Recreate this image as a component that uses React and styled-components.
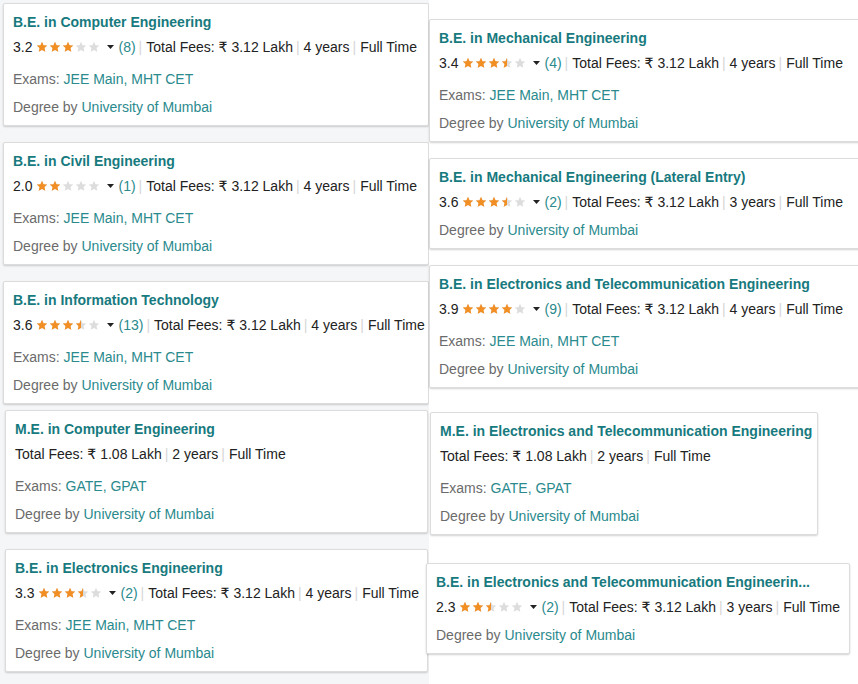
import React, { useId } from 'react';
import styled, { createGlobalStyle } from 'styled-components';

const GlobalStyle = createGlobalStyle`
  html, body {
    margin: 0;
    padding: 0;
    background: #fff;
  }
  body {
    font-family: "Liberation Sans", Arial, "DejaVu Sans", sans-serif;
    font-size: 14px;
    color: #333;
  }
`;

const Page = styled.div`
  display: flex;
  width: 858px;
  height: 684px;
  overflow: hidden;
`;

const Column = styled.div`
  flex: ${p => (p.$width ? `0 0 ${p.$width}px` : '1 1 auto')};
  min-width: 0;
  display: flex;
  flex-direction: column;
  align-items: flex-start;
  background: ${p => p.$bg};
`;

const Card = styled.div`
  box-sizing: border-box;
  flex-shrink: 0;
  width: ${p => p.$width}px;
  margin-top: ${p => p.$top}px;
  margin-left: ${p => p.$left}px;
  padding: 8px 10px 8px 9px;
  overflow: hidden;
  background: #fff;
  border: 1px solid #dcdcdc;
  border-radius: 2px;
  box-shadow: 0 1px 2px rgba(0, 0, 0, 0.18);
`;

const Title = styled.div`
  font-weight: bold;
  font-size: 14px;
  line-height: 20px;
  color: #177a7e;
  white-space: nowrap;
`;

const MetaRow = styled.div`
  display: flex;
  align-items: center;
  margin-top: 5px;
  line-height: 20px;
  white-space: nowrap;
  color: #222;

  & > * {
    flex-shrink: 0;
  }
`;

const StarRow = styled.span`
  display: inline-flex;
  gap: 1px;
  margin-left: 4px;
`;

const Caret = styled.svg`
  margin-left: 7px;
`;

const Count = styled.span`
  margin-left: 4px;
  color: #2a8a8d;
`;

const Sep = styled.span`
  margin: 0 4px 0 3px;
  color: #d6d6d6;
`;

const InfoLine = styled.div`
  margin-top: ${p => (p.$spaced ? 12 : 8)}px;
  line-height: 20px;
  color: #6b6b6b;
  white-space: nowrap;
`;

const Link = styled.span`
  color: #2a8a8d;
`;

const STAR = 'M12 1.6l3.1 6.8 7.4.8-5.5 5 1.6 7.4L12 17.8l-6.6 3.8 1.6-7.4-5.5-5 7.4-.8z';

const Star = ({ fill }) => {
  const id = 's' + useId().replace(/[^a-zA-Z0-9]/g, '');
  return (
    <svg width="12" height="12" viewBox="0 0 24 24">
      <defs>
        <clipPath id={id}>
          <rect x="0" y="0" width={24 * fill} height="24" />
        </clipPath>
      </defs>
      <path d={STAR} fill="#dddddd" />
      {fill > 0 && <path d={STAR} fill="#f28f24" clipPath={`url(#${id})`} />}
    </svg>
  );
};

const Stars = ({ rating }) => {
  const r = Math.round(rating * 2) / 2;
  return (
    <StarRow>
      {[0, 1, 2, 3, 4].map(i => (
        <Star key={i} fill={Math.max(0, Math.min(1, r - i))} />
      ))}
    </StarRow>
  );
};

const CourseCard = ({ c, width, top, left }) => (
  <Card $width={width} $top={top} $left={left}>
    <Title>{c.title}</Title>
    <MetaRow>
      {c.rating != null && (
        <>
          <span>{c.rating.toFixed(1)}</span>
          <Stars rating={c.rating} />
          <Caret width="7" height="4" viewBox="0 0 7 4">
            <path d="M0 0h7L3.5 4z" fill="#222" />
          </Caret>
          <Count>({c.reviews})</Count>
          <Sep>|</Sep>
        </>
      )}
      <span>Total Fees: ₹ {c.fees} Lakh</span>
      <Sep>|</Sep>
      <span>{c.years} years</span>
      <Sep>|</Sep>
      <span>Full Time</span>
    </MetaRow>
    {c.exams && (
      <InfoLine $spaced>
        Exams: <Link>{c.exams}</Link>
      </InfoLine>
    )}
    <InfoLine>
      Degree by <Link>University of Mumbai</Link>
    </InfoLine>
  </Card>
);

const JEE = 'JEE Main, MHT CET';
const GATE = 'GATE, GPAT';

const leftCards = [
  { c: { title: 'B.E. in Computer Engineering', rating: 3.2, reviews: 8, fees: '3.12', years: 4, exams: JEE }, width: 426, top: 3, left: 3 },
  { c: { title: 'B.E. in Civil Engineering', rating: 2.0, reviews: 1, fees: '3.12', years: 4, exams: JEE }, width: 426, top: 16, left: 3 },
  { c: { title: 'B.E. in Information Technology', rating: 3.6, reviews: 13, fees: '3.12', years: 4, exams: JEE }, width: 426, top: 16, left: 3 },
  { c: { title: 'M.E. in Computer Engineering', fees: '1.08', years: 2, exams: GATE }, width: 423, top: 6, left: 5 },
  { c: { title: 'B.E. in Electronics Engineering', rating: 3.3, reviews: 2, fees: '3.12', years: 4, exams: JEE }, width: 423, top: 16, left: 5 },
];

const rightCards = [
  { c: { title: 'B.E. in Mechanical Engineering', rating: 3.4, reviews: 4, fees: '3.12', years: 4, exams: JEE }, width: 440, top: 19, left: 0 },
  { c: { title: 'B.E. in Mechanical Engineering (Lateral Entry)', rating: 3.6, reviews: 2, fees: '3.12', years: 3 }, width: 440, top: 16, left: 0 },
  { c: { title: 'B.E. in Electronics and Telecommunication Engineering', rating: 3.9, reviews: 9, fees: '3.12', years: 4, exams: JEE }, width: 440, top: 16, left: 0 },
  { c: { title: 'M.E. in Electronics and Telecommunication Engineering', fees: '1.08', years: 2, exams: GATE }, width: 388, top: 24, left: 1 },
  { c: { title: 'B.E. in Electronics and Telecommunication Engineerin...', rating: 2.3, reviews: 2, fees: '3.12', years: 3 }, width: 424, top: 28, left: -3 },
];

export default function App() {
  return (
    <>
      <GlobalStyle />
      <Page>
        <Column $width={429} $bg="#f5f6f8">
          {leftCards.map((p, i) => (
            <CourseCard key={i} {...p} />
          ))}
        </Column>
        <Column $bg="#fff">
          {rightCards.map((p, i) => (
            <CourseCard key={i} {...p} />
          ))}
        </Column>
      </Page>
    </>
  );
}
